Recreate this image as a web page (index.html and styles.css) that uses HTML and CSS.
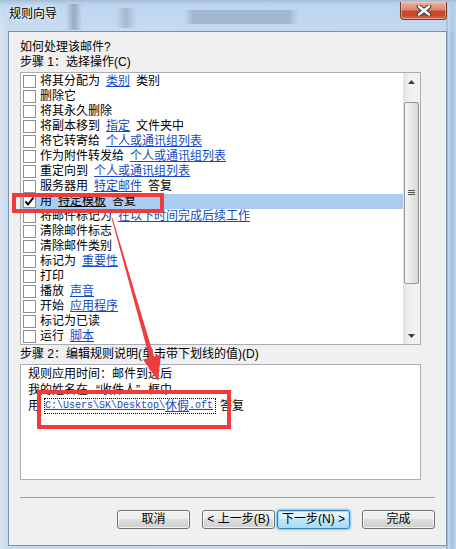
FILE: index.html
```html
<!DOCTYPE html>
<html lang="zh-CN">
<head>
<meta charset="utf-8">
<title>规则向导</title>
<link rel="stylesheet" href="styles.css">
</head>
<body>
<div class="window">
  <div class="titlebar">
    <span class="title">规则向导</span>
    <div class="close">
      <svg width="16" height="11" viewBox="0 0 16 11">
        <path d="M3 1.5 L13 9.5 M13 1.5 L3 9.5" stroke="#3b3b45" stroke-width="4.6" stroke-linecap="round" fill="none"/>
        <path d="M3 1.5 L13 9.5 M13 1.5 L3 9.5" stroke="#ffffff" stroke-width="2.6" stroke-linecap="round" fill="none"/>
      </svg>
    </div>
  </div>
  <div class="client">
    <div class="label first">如何处理该邮件?</div>
    <div class="label">步骤 1：选择操作(C)</div>
    <div class="listbox">
      <div class="rows">
        <div class="row"><span class="cb"></span>将其分配为<span class="lk">类别</span>类别</div>
        <div class="row"><span class="cb"></span>删除它</div>
        <div class="row"><span class="cb"></span>将其永久删除</div>
        <div class="row"><span class="cb"></span>将副本移到<span class="lk">指定</span>文件夹中</div>
        <div class="row"><span class="cb"></span>将它转寄给<span class="lk">个人或通讯组列表</span></div>
        <div class="row"><span class="cb"></span>作为附件转发给<span class="lk">个人或通讯组列表</span></div>
        <div class="row"><span class="cb"></span>重定向到<span class="lk">个人或通讯组列表</span></div>
        <div class="row"><span class="cb"></span>服务器用<span class="lk">特定邮件</span>答复</div>
        <div class="row sel"><span class="cb"><svg width="11" height="11" viewBox="0 0 11 11"><path d="M1.5 5.5 L4 8.5 L9.5 1.5" stroke="#000" stroke-width="2" fill="none"/></svg></span>用<span class="lk">特定模板</span>答复</div>
        <div class="row"><span class="cb"></span>将邮件标记为<span class="lk">在以下时间完成后续工作</span></div>
        <div class="row"><span class="cb"></span>清除邮件标志</div>
        <div class="row"><span class="cb"></span>清除邮件类别</div>
        <div class="row"><span class="cb"></span>标记为<span class="lk">重要性</span></div>
        <div class="row"><span class="cb"></span>打印</div>
        <div class="row"><span class="cb"></span>播放<span class="lk">声音</span></div>
        <div class="row"><span class="cb"></span>开始<span class="lk">应用程序</span></div>
        <div class="row"><span class="cb"></span>标记为已读</div>
        <div class="row"><span class="cb"></span>运行<span class="lk">脚本</span></div>
      </div>
      <div class="sb">
        <div class="sb-btn"><svg width="7" height="4" viewBox="0 0 7 4"><polygon points="3.5,0 7,4 0,4" fill="#3c3c3c"/></svg></div>
        <div class="thumb">
          <svg width="7" height="6" viewBox="0 0 7 6"><path d="M0 0.5H7M0 2.5H7M0 4.5H7" stroke="#555" stroke-width="1"/></svg>
        </div>
        <div class="sb-space"></div>
        <div class="sb-btn"><svg width="7" height="4" viewBox="0 0 7 4"><polygon points="0,0 7,0 3.5,4" fill="#3c3c3c"/></svg></div>
      </div>
    </div>
    <div class="label step2">步骤 2：编辑规则说明(单击带下划线的值)(D)</div>
    <div class="desc">
      <div class="dline">规则应用时间：邮件到达后</div>
      <div class="dline">我的姓名在<span class="qo">“</span>收件人<span class="qc">”</span>框中</div>
      <div class="dline">用<span class="path">C:\Users\SK\Desktop\<span class="cjk">休假</span>.oft</span>答复</div>
    </div>
    <div class="sep"></div>
    <div class="buttons">
      <div class="btn gap">取消</div>
      <div class="btn small-gap">&lt; 上一步(B)</div>
      <div class="btn focus gap">下一步(N) &gt;</div>
      <div class="btn">完成</div>
    </div>
  </div>
  <div class="mark mark-row"></div>
  <div class="mark mark-path"></div>
  <svg class="arrow" width="456" height="549" viewBox="0 0 456 549">
    <polygon points="111.5,218 112.5,218 154,356.5 161,354.5 158,381 143,359.5 149.5,358" fill="#f03c3c"/>
  </svg>
</div>
</body>
</html>
```
FILE: styles.css
```css
* {
  box-sizing: border-box;
}

body {
  margin: 0;
  font-family: "Liberation Sans", "Noto Sans CJK SC", sans-serif;
  font-size: 12px;
  color: #000;
}

.window {
  position: relative;
  width: 456px;
  height: 549px;
  display: flex;
  flex-direction: column;
  overflow: hidden;
  background:
    linear-gradient(180deg, #8e9aa6 0, #b7c8da 3px, rgba(183, 200, 218, 0) 6px),
    linear-gradient(90deg, #dbe6f1 0, #c8daee 8px, #c2d7ee 446px, #7f95ad 447px, #c8dcf1 448px, #9dc3ea 452px, #bfd5ec 456px);
}

.titlebar {
  height: 31px;
  flex: none;
  display: flex;
  justify-content: space-between;
  align-items: flex-start;
  background:
    linear-gradient(90deg, rgba(70, 90, 110, 0), rgba(70, 90, 110, 0.35), rgba(70, 90, 110, 0)) 66px 4px / 16px 26px no-repeat,
    linear-gradient(90deg, rgba(70, 90, 110, 0), rgba(70, 90, 110, 0.25), rgba(70, 90, 110, 0)) 116px 8px / 20px 20px no-repeat,
    linear-gradient(90deg, rgba(80, 100, 130, 0), rgba(80, 100, 130, 0.28) 8%, rgba(80, 100, 130, 0.28) 92%, rgba(80, 100, 130, 0)) 184px 10px / 114px 14px no-repeat,
    linear-gradient(180deg, rgba(180, 210, 240, 0.6), rgba(200, 222, 244, 0.3));
}

.title {
  padding-left: 9px;
  line-height: 29px;
  font-size: 12px;
  text-shadow: 0 0 5px #eef4fb, 0 0 5px #eef4fb;
}

.close {
  margin: 2px 9px 0 0;
  width: 47px;
  height: 18px;
  border: 1px solid #7a3b30;
  border-top: none;
  border-radius: 0 0 4px 4px;
  background: linear-gradient(180deg, #e9b3a6 0, #dc8672 45%, #c9462b 55%, #c6492c 80%, #d8745c 100%);
  box-shadow: inset 0 0 0 1px rgba(255, 220, 210, 0.45);
  display: flex;
  align-items: center;
  justify-content: center;
}

.client {
  flex: 1;
  margin: 0 9px 3px 8px;
  background: #f0f0f0;
  border: 1px solid #7f91a5;
}

.label {
  padding-left: 11px;
  height: 15px;
  line-height: 15px;
  white-space: nowrap;
}

.label.first {
  margin-top: 8px;
}

.label.step2 {
  margin-top: 2px;
}

.listbox {
  margin: 2px 0 0 11px;
  width: 401px;
  height: 273px;
  border: 1px solid #abadb3;
  background: #fff;
  display: flex;
}

.rows {
  flex: 1;
  padding-top: 1px;
}

.row {
  height: 15px;
  line-height: 15px;
  display: flex;
  align-items: center;
  padding-left: 2px;
  white-space: nowrap;
}

.row.sel {
  background: #a8cdf0;
}

.cb {
  flex: none;
  width: 13px;
  height: 13px;
  margin-right: 4px;
  border: 1px solid #8e8f8f;
  background: #fff;
  display: flex;
  align-items: center;
  justify-content: center;
}

.lk {
  margin: 0 6px;
  color: #1549c4;
  text-decoration: underline;
}

.sel .lk {
  color: #000;
}

.sb {
  flex: none;
  width: 17px;
  display: flex;
  flex-direction: column;
  background: linear-gradient(90deg, #e2e2e2 0, #efefef 35%, #f2f2f2 100%);
}

.sb-btn {
  height: 17px;
  display: flex;
  align-items: center;
  justify-content: center;
}

.thumb {
  margin: 12px 1px 0 1px;
  height: 182px;
  border: 1px solid #979797;
  border-radius: 2px;
  background: linear-gradient(90deg, #f5f5f5 0, #e8e8e8 45%, #d6d6d6 100%);
  display: flex;
  align-items: center;
  justify-content: center;
}

.sb-space {
  flex: 1;
}

.desc {
  margin: 2px 0 0 11px;
  width: 401px;
  height: 116px;
  border: 1px solid #abadb3;
  background: #fff;
  padding: 1px 0 0 7px;
}

.dline {
  height: 16px;
  line-height: 16px;
  display: flex;
  align-items: center;
  white-space: nowrap;
}

.qo,
.qc {
  display: inline-block;
  width: 12px;
}

.qo {
  text-align: right;
}

.qc {
  text-align: left;
}

.path {
  margin: 0 4px;
  height: 16px;
  padding: 0 2px 0 0;
  border: 1px dotted #000;
  font-family: "Liberation Mono", monospace;
  font-size: 10px;
  line-height: 14px;
  color: #1549c4;
  text-decoration: underline;
  display: inline-flex;
  align-items: center;
}

.path .cjk {
  font-family: "Liberation Sans", "Noto Sans CJK SC", sans-serif;
  font-size: 12px;
}

.sep {
  margin: 17px 11px 0 11px;
  height: 1px;
  background: #a0a0a0;
}

.buttons {
  margin-top: 12px;
  padding-right: 11px;
  display: flex;
  justify-content: flex-end;
}

.btn {
  width: 73px;
  height: 19px;
  border: 1px solid #707070;
  border-radius: 3px;
  background: linear-gradient(180deg, #f2f2f2 0, #ebebeb 50%, #dddddd 50%, #cfcfcf 100%);
  box-shadow: inset 0 0 0 1px rgba(255, 255, 255, 0.75);
  display: flex;
  align-items: center;
  justify-content: center;
  white-space: nowrap;
  line-height: 15px;
}

.btn.gap {
  margin-right: 12px;
}

.btn.small-gap {
  margin-right: 2px;
}

.btn.focus {
  border-color: #3c7fb1;
  background: linear-gradient(180deg, #eaf6fd 0, #d9f0fc 50%, #bee6fd 50%, #a7d9f5 100%);
  box-shadow: 0 0 2px 1px #6cc8f7, inset 0 0 0 1px #a6ddfb;
}

.mark {
  position: absolute;
  border: 4px solid #ee3b3b;
  pointer-events: none;
}

.mark-row {
  left: 12px;
  top: 193px;
  width: 152px;
  height: 20px;
}

.mark-path {
  left: 37px;
  top: 390px;
  width: 194px;
  height: 39px;
}

.arrow {
  position: absolute;
  left: 0;
  top: 0;
  pointer-events: none;
}
```
